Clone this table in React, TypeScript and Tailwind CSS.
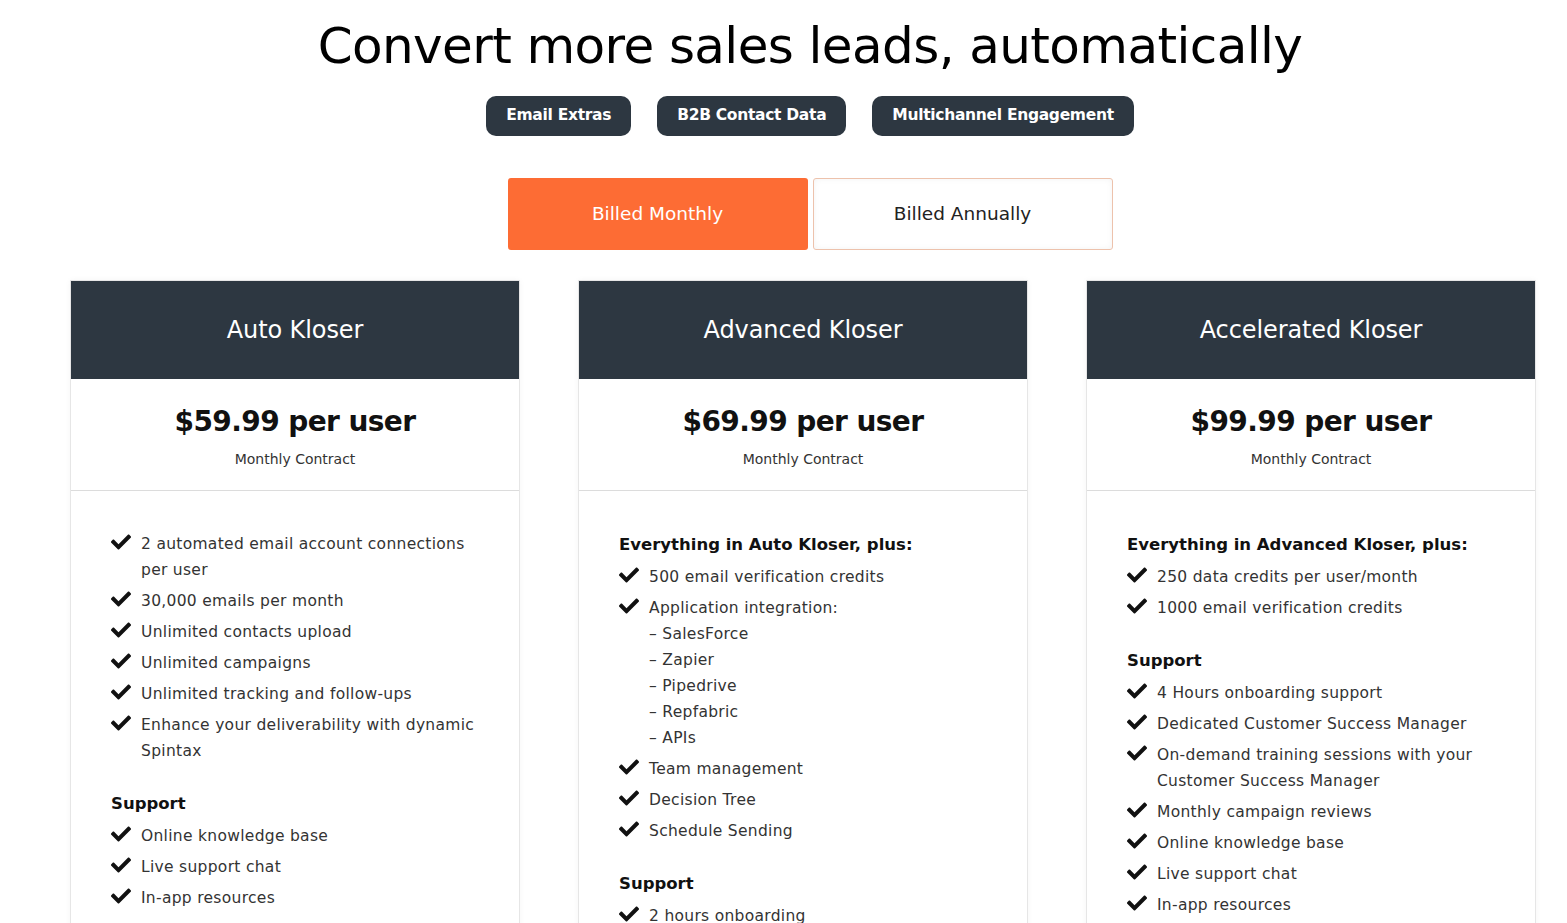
import { FaCheck } from "react-icons/fa";

type Item = { text: string; subs?: string[] };
type Group = { heading?: string; items: Item[] };
type Plan = { name: string; price: string; groups: Group[] };

const plans: Plan[] = [
  {
    name: "Auto Kloser",
    price: "$59.99 per user",
    groups: [
      {
        items: [
          { text: "2 automated email account connections per user" },
          { text: "30,000 emails per month" },
          { text: "Unlimited contacts upload" },
          { text: "Unlimited campaigns" },
          { text: "Unlimited tracking and follow-ups" },
          { text: "Enhance your deliverability with dynamic Spintax" },
        ],
      },
      {
        heading: "Support",
        items: [
          { text: "Online knowledge base" },
          { text: "Live support chat" },
          { text: "In-app resources" },
        ],
      },
    ],
  },
  {
    name: "Advanced Kloser",
    price: "$69.99 per user",
    groups: [
      {
        heading: "Everything in Auto Kloser, plus:",
        items: [
          { text: "500 email verification credits" },
          {
            text: "Application integration:",
            subs: ["SalesForce", "Zapier", "Pipedrive", "Repfabric", "APIs"],
          },
          { text: "Team management" },
          { text: "Decision Tree" },
          { text: "Schedule Sending" },
        ],
      },
      {
        heading: "Support",
        items: [{ text: "2 hours onboarding" }, { text: "Online knowledge base" }],
      },
    ],
  },
  {
    name: "Accelerated Kloser",
    price: "$99.99 per user",
    groups: [
      {
        heading: "Everything in Advanced Kloser, plus:",
        items: [
          { text: "250 data credits per user/month" },
          { text: "1000 email verification credits" },
        ],
      },
      {
        heading: "Support",
        items: [
          { text: "4 Hours onboarding support" },
          { text: "Dedicated Customer Success Manager" },
          { text: "On-demand training sessions with your Customer Success Manager" },
          { text: "Monthly campaign reviews" },
          { text: "Online knowledge base" },
          { text: "Live support chat" },
          { text: "In-app resources" },
        ],
      },
    ],
  },
];

const pills = ["Email Extras", "B2B Contact Data", "Multichannel Engagement"];

function PlanCard({ plan }: { plan: Plan }) {
  return (
    <div className="w-[450px] border border-[#e6e6e6] bg-white shadow-[0_0_6px_rgba(0,0,0,0.04)]">
      <div className="h-[98px] bg-[#2d3741] flex items-center justify-center">
        <h3 className="text-[24px] text-white tracking-[-0.1px]">{plan.name}</h3>
      </div>
      <div className="h-[112px] border-b border-[#dcdcdc] flex flex-col items-center pt-[24px]">
        <div className="text-[28px] font-bold text-[#111] leading-[38px] tracking-[-0.6px]">
          {plan.price}
        </div>
        <div className="text-[14px] text-[#333] mt-[8px]">Monthly Contract</div>
      </div>
      <div className="px-[40px] pt-[40px] pb-[20px] flex flex-col gap-[26px]">
        {plan.groups.map((g, gi) => (
          <div key={gi}>
            {g.heading && (
              <div className="text-[16.5px] font-bold text-[#111] leading-[26px] mb-[6px] mt-[1px]">
                {g.heading}
              </div>
            )}
            <ul className="flex flex-col gap-[5px]">
              {g.items.map((it, ii) => (
                <li
                  key={ii}
                  className="flex items-start text-[15.5px] leading-[26px] text-[#333] tracking-[0.3px]"
                >
                  <FaCheck className="w-[20px] h-[20px] mt-[1px] shrink-0 text-[#111]" />
                  <div className="ml-[10px]">
                    <div>{it.text}</div>
                    {it.subs?.map((s) => (
                      <div key={s}>– {s}</div>
                    ))}
                  </div>
                </li>
              ))}
            </ul>
          </div>
        ))}
      </div>
    </div>
  );
}

export default function App() {
  return (
    <div
      className="min-h-screen bg-white text-black overflow-hidden"
      style={{ fontFamily: '"DejaVu Sans", "Noto Sans", sans-serif' }}
    >
      <div className="ml-[70px] w-[1480px] flex flex-col items-center pt-[18px]">
        <h1 className="text-[50px] font-medium leading-[56px] tracking-[-0.6px]">
          Convert more sales leads, automatically
        </h1>
        <div className="flex gap-[26px] mt-[22px]">
          {pills.map((p) => (
            <span
              key={p}
              className="h-[40px] px-[20px] rounded-[10px] bg-[#2d3741] text-white text-[15.5px] font-bold flex items-center tracking-[-0.3px]"
            >
              {p}
            </span>
          ))}
        </div>
        <div className="flex gap-[5px] mt-[42px]">
          <button className="w-[300px] h-[72px] rounded-[3px] bg-[#fd6c34] text-white text-[18.5px]">
            Billed Monthly
          </button>
          <button className="w-[300px] h-[72px] rounded-[3px] bg-white border border-[#edc2ac] text-[#222] text-[18.5px] shadow-[inset_0_0_6px_rgba(0,0,0,0.05)]">
            Billed Annually
          </button>
        </div>
      </div>
      <div className="ml-[70px] mt-[30px] flex gap-[58px] items-start">
        {plans.map((p) => (
          <PlanCard key={p.name} plan={p} />
        ))}
      </div>
    </div>
  );
}
